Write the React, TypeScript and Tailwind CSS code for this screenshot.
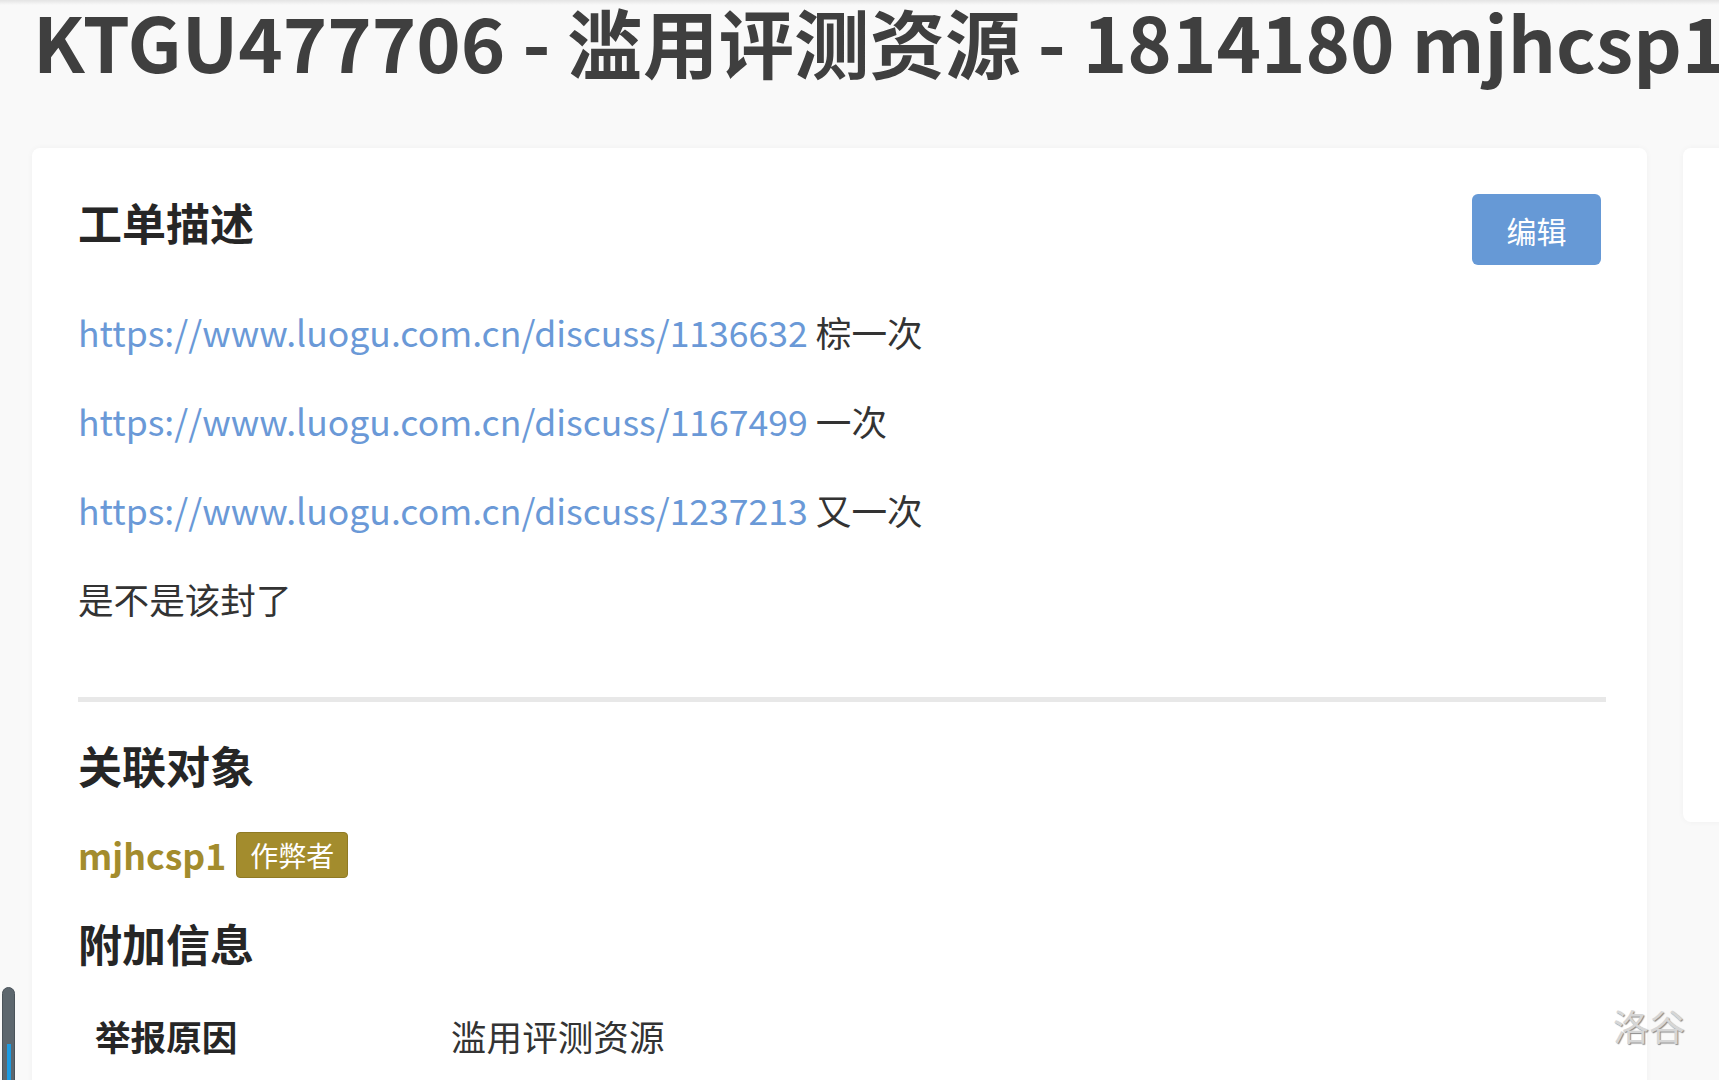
import React from "react";

export default function App() {
  const font = { fontFamily: '"Noto Sans CJK SC", "Noto Sans", sans-serif' };
  const links = [
    { url: "https://www.luogu.com.cn/discuss/1136632", note: "棕一次" },
    { url: "https://www.luogu.com.cn/discuss/1167499", note: "一次" },
    { url: "https://www.luogu.com.cn/discuss/1237213", note: "又一次" },
  ];
  return (
    <div
      className="relative h-[1080px] w-[1719px] overflow-hidden bg-[#f9f9f9] font-['Noto_Sans_CJK_SC',sans-serif]"
      style={font}
    >
      <div className="h-[5px] bg-gradient-to-b from-[#e4e4e4] to-[#f9f9f9]" />
      <h1 className="-mt-[5px] whitespace-nowrap pl-[33px] text-[75.5px] font-bold leading-[80px] text-[#3f3f3f]">
        KTGU477706 - 滥用评测资源 - 1814180 mjhcsp1
      </h1>
      <div className="mt-[68px] flex gap-[36px] pl-[32px]">
        <div className="h-[1000px] w-[1615px] shrink-0 rounded-[8px] bg-white px-[46px] pt-[46px] shadow-[0_0_6px_rgba(0,0,0,0.04)]">
          <div className="flex h-[71px] items-start justify-between">
            <h2 className="text-[44px] font-bold leading-[56px] text-[#262626]">工单描述</h2>
            <button className="h-[71px] w-[129px] rounded-[6px] bg-[#6699d6] text-[30px] leading-none text-white">
              编辑
            </button>
          </div>
          <div className="mt-[22px] text-[35.6px] text-[#333]">
            {links.map((l) => (
              <p key={l.url} className="leading-[89px]">
                <a className="text-[#6a99d7]">{l.url}</a> {l.note}
              </p>
            ))}
            <p className="leading-[89px]">是不是该封了</p>
          </div>
          <div className="-mr-[5px] mt-[54px] h-[5px] bg-[#e8e8e8]" />
          <h2 className="mt-[33px] text-[44px] font-bold leading-[60px] text-[#262626]">关联对象</h2>
          <div className="mt-[30px] flex h-[60px] items-center gap-[10px]">
            <span className="text-[35.6px] font-bold text-[#a38c2d]">mjhcsp1</span>
            <span className="flex h-[46px] items-center rounded-[4px] border border-[#8f7a24] bg-[#a38c2d] px-[13px] text-[28px] leading-none text-white">
              作弊者
            </span>
          </div>
          <h2 className="mt-[28px] text-[44px] font-bold leading-[60px] text-[#262626]">附加信息</h2>
          <div className="mt-[33px] flex h-[60px] items-center text-[35.6px] text-[#333]">
            <span className="w-[373px] pl-[17px] font-bold text-[#262626]">举报原因</span>
            <span>滥用评测资源</span>
          </div>
        </div>
        <div className="h-[674px] w-[200px] shrink-0 rounded-[8px] bg-white shadow-[0_0_6px_rgba(0,0,0,0.04)]" />
      </div>
      <div className="absolute bottom-[37px] right-[34px] text-[36px] leading-none text-[#d6d6d6] [text-shadow:1px_1px_1px_#8a8a8a]">
        洛谷
      </div>
      <div className="absolute left-[2px] top-[987px] h-[100px] w-[13px] rounded-t-full border border-[#4a535a] bg-[#5d676e]">
        <div className="ml-[4px] mt-[56px] h-[60px] w-[4px] bg-[#1c9be2]" />
      </div>
    </div>
  );
}
